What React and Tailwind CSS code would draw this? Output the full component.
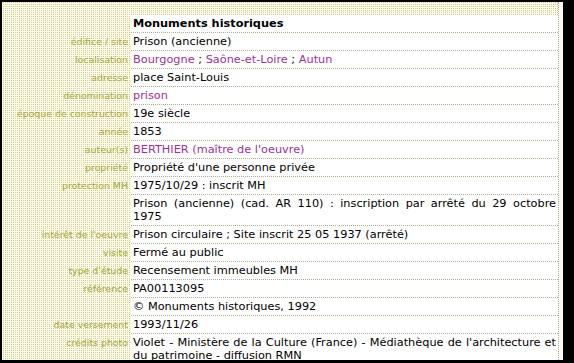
const rows = [
  { label: "édifice / site", value: "Prison (ancienne)" },
  {
    label: "localisation",
    value: (
      <>
        <a className="text-[#993399]">Bourgogne</a> ; <a className="text-[#993399]">Saône-et-Loire</a> ;{" "}
        <a className="text-[#993399]">Autun</a>
      </>
    ),
  },
  { label: "adresse", value: "place Saint-Louis" },
  { label: "dénomination", value: <a className="text-[#993399]">prison</a> },
  { label: "époque de construction", value: "19e siècle" },
  { label: "année", value: "1853" },
  {
    label: "auteur(s)",
    value: (
      <>
        <a className="text-[#993399]">BERTHIER</a> <a className="text-[#993399]">(maître de l'oeuvre)</a>
      </>
    ),
  },
  { label: "propriété", value: "Propriété d'une personne privée" },
  { label: "protection MH", value: "1975/10/29 : inscrit MH" },
  { label: "", value: "Prison (ancienne) (cad. AR 110) : inscription par arrêté du 29 octobre 1975" },
  { label: "intérêt de l'oeuvre", value: "Prison circulaire ; Site inscrit 25 05 1937 (arrêté)" },
  { label: "visite", value: "Fermé au public" },
  { label: "type d'étude", value: "Recensement immeubles MH" },
  { label: "référence", value: "PA00113095" },
  { label: "", value: "© Monuments historiques, 1992" },
  { label: "date versement", value: "1993/11/26" },
  {
    label: "crédits photo",
    value: "Violet - Ministère de la Culture (France) - Médiathèque de l'architecture et du patrimoine - diffusion RMN",
  },
];

function Row({ label, value, bold }) {
  return (
    <div className="flex items-baseline">
      <div className="w-[128px] shrink-0 pr-[2px] text-right text-[9.4px] leading-[13px] text-[#a6a43c]">
        {label}
      </div>
      <div
        className={
          "ml-px flex-1 bg-white px-[2px] py-[2px] border-b border-dotted border-[#aeae96] text-justify text-[11.3px] leading-[13px] text-black" +
          (bold ? " font-bold" : "")
        }
      >
        {value}
      </div>
    </div>
  );
}

export default function App() {
  return (
    <div className="w-[574px] h-[363px] overflow-hidden bg-black pt-[2px] pl-[2px] pr-[11px] pb-[3px] font-['DejaVu_Sans',sans-serif]">
      <div className="flex h-full">
        <div className="flex-1 overflow-hidden pt-[13px] bg-[#fffee6] bg-[conic-gradient(#cecca8_25%,#fffee4_0)] bg-[length:2px_2px]">
          <Row label="" value="Monuments historiques" bold />
          {rows.map((r, i) => (
            <Row key={i} label={r.label} value={r.value} />
          ))}
        </div>
        <div className="w-[5px] border-l border-dotted border-[#aeae96] bg-[#fbfbf4]" />
      </div>
    </div>
  );
}
